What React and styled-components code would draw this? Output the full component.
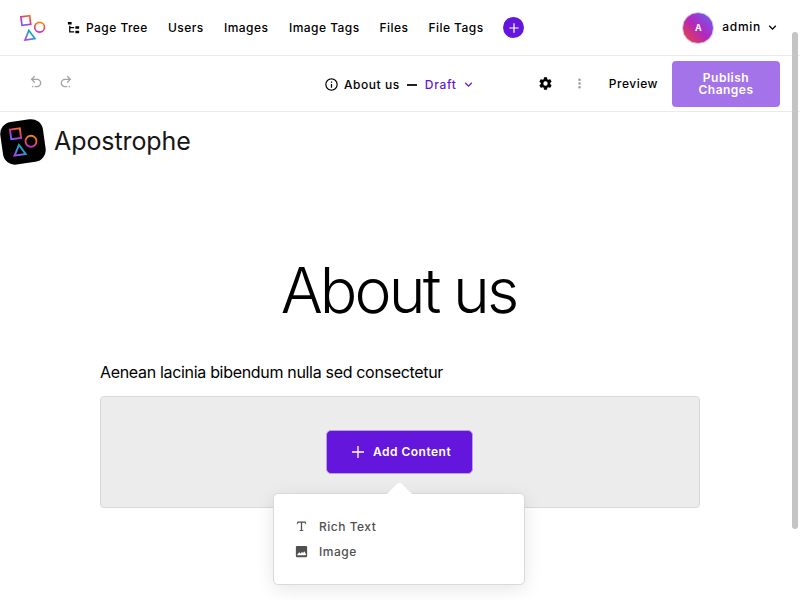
import React from 'react';
import styled, { createGlobalStyle } from 'styled-components';

const Global = createGlobalStyle`
  *, *::before, *::after { box-sizing: border-box; }
  html, body { margin: 0; height: 100%; overflow: hidden; background: #fff; }
  body { font-family: Inter, 'Liberation Sans', sans-serif; color: #000; }
  button { font: inherit; letter-spacing: inherit; color: inherit; border: 0; padding: 0; background: none; }
`;

const Page = styled.div`
  position: relative;
  width: 800px;
  height: 600px;
  overflow: hidden;
`;

const Bar = styled.header`
  display: flex;
  align-items: center;
  height: 56px;
  border-bottom: 1px solid #eaeaea;
  padding: ${p => p.$pad};
  font-size: 12px;
  font-weight: 500;
  line-height: 16px;
  letter-spacing: 0.5px;
`;

const LogoSlot = styled.div`
  display: flex;
  width: 46px;
`;

const Nav = styled.nav`
  display: flex;
  align-items: center;
  gap: 20px;
`;

const NavItem = styled.button`
  display: flex;
  align-items: center;
  gap: 5px;
  white-space: nowrap;
  letter-spacing: 0.45px;
  width: ${p => p.$w}px;
`;

const AddButton = styled.button`
  display: flex;
  align-items: center;
  justify-content: center;
  width: 21px;
  height: 21px;
  border-radius: 50%;
  background: #6516dd;
  color: #fff;
`;

const UserMenu = styled.button`
  display: flex;
  align-items: center;
  margin-left: auto;
`;

const Avatar = styled.span`
  display: flex;
  align-items: center;
  justify-content: center;
  width: 32px;
  height: 32px;
  margin-right: 8px;
  border: 1px solid #d9c9e8;
  border-radius: 50%;
  background: linear-gradient(45deg, #ea433a 5%, #b327bf 50%, #6b62f5 95%);
  background-origin: border-box;
  color: #fff;
  font-size: 9px;
  font-weight: 700;
  letter-spacing: 0;
`;

const UserName = styled.span`
  margin: -1px 4px 0 0;
  letter-spacing: 0.7px;
`;

const Icon = styled.svg`
  display: block;
  flex: none;
  width: ${p => p.$size}px;
  height: ${p => p.$size}px;
  fill: currentColor;
  color: ${p => p.$color || 'inherit'};
`;

const Column = styled.div`
  display: flex;
  align-items: center;
  flex: ${p => p.$flex};
  justify-content: ${p => p.$justify || 'flex-start'};
  gap: ${p => p.$gap || 0}px;
`;

const History = styled(Column)`
  padding: 0 0 4px 8px;
`;

const PageStatus = styled(Column)`
  padding-top: 2px;
`;

const Title = styled.span`
  margin: 0 7px 0 5px;
  letter-spacing: 0.55px;
`;

const Status = styled.button`
  display: flex;
  align-items: center;
  gap: 4px;
  margin-left: 8px;
  color: #6516dd;
  letter-spacing: 0.7px;
`;

const Dash = styled.span`
  width: 10px;
  height: 2px;
  background: #222;
`;

const Preview = styled.button`
  margin: 0 14px 0 22px;
`;

const Publish = styled.button`
  width: 108px;
  height: 46px;
  border-radius: 4px;
  background: #a473ea;
  color: #fff;
  font-weight: 600;
  line-height: 12px;
`;

const PublishLine = styled.span`
  display: block;
  height: 12px;
`;

const Brand = styled.div`
  display: flex;
  align-items: center;
  height: 60px;
  gap: 8px;
  font-size: 25px;
  letter-spacing: -0.08px;
  color: #161616;
`;

const BrandName = styled.span`
  margin-top: -2px;
`;

const Heading = styled.h1`
  margin: 79px 0 0;
  padding-right: 3px;
  text-align: center;
  font-size: 62.5px;
  line-height: 78px;
  font-weight: 275;
  letter-spacing: -2.9px;
`;

const Content = styled.main`
  width: 600px;
  margin: 31px auto 0;
`;

const Paragraph = styled.p`
  margin: 0 0 12px;
  font-size: 16px;
  line-height: 24px;
  letter-spacing: -0.32px;
`;

const DropArea = styled.section`
  display: flex;
  justify-content: center;
  height: 112px;
  padding-top: 33px;
  border: 1px solid #d9d9d9;
  border-radius: 4px;
  background: #ececec;
`;

const AddContent = styled.div`
  position: relative;
  width: 148px;
  height: 44px;
`;

const AddContentButton = styled.button`
  display: flex;
  align-items: center;
  width: 147px;
  height: 44px;
  padding: 0 0 1px 23px;
  gap: 7px;
  border: 1px solid #b9a0dd;
  border-radius: 5px;
  background: #6516dd;
  color: #fff;
  font-size: 12px;
  font-weight: 600;
  letter-spacing: 0.48px;
  white-space: nowrap;
`;

const Menu = styled.div`
  position: absolute;
  top: 63px;
  left: -53px;
  width: 252px;
  height: 92px;
  padding: 20px;
  border: 1px solid #d9d9d9;
  border-radius: 5px;
  background: #fff;
  box-shadow: 0 4px 18px rgba(0, 0, 0, 0.1);
  font-size: 12px;
  font-weight: 500;
  letter-spacing: 0.5px;
`;

const Tip = styled.svg`
  position: absolute;
  top: -12px;
  left: 112px;
  width: 27px;
  height: 13px;
`;

const MenuItem = styled.button`
  display: flex;
  align-items: center;
  height: 25px;
  gap: 10px;
  color: #505050;
`;

const Scrollbar = styled.div`
  position: absolute;
  top: 32px;
  left: 792px;
  width: 6px;
  height: 497px;
  border-radius: 3px;
  background: #c4c4c4;
`;

const paths = {
  tree: 'M3,3H9V7H3V3M15,10H21V14H15V10M15,17H21V21H15V17M13,13H7V18H13V20H7L5,20V9H7V11H13V13Z',
  plus: 'M19,12.9H12.9V19H11.1V12.9H5V11.1H11.1V5H12.9V11.1H19V12.9Z',
  plusWide: 'M21,13H13V21H11V13H3V11H11V3H13V11H21Z',
  chevron: 'M7.41,8.58L12,13.17L16.59,8.58L18,10L12,16L6,10L7.41,8.58Z',
  info: 'M11,9H13V7H11M12,20C7.59,20 4,16.41 4,12C4,7.59 7.59,4 12,4C16.41,4 20,7.59 20,12C20,16.41 16.41,20 12,20M12,2A10,10 0 0,0 2,12A10,10 0 0,0 12,22A10,10 0 0,0 22,12A10,10 0 0,0 12,2M11,17H13V11H11V17Z',
  cog: 'M12,15.5A3.5,3.5 0 0,1 8.5,12A3.5,3.5 0 0,1 12,8.5A3.5,3.5 0 0,1 15.5,12A3.5,3.5 0 0,1 12,15.5M19.43,12.97C19.47,12.65 19.5,12.33 19.5,12C19.5,11.67 19.47,11.34 19.43,11L21.54,9.37C21.73,9.22 21.78,8.95 21.66,8.73L19.66,5.27C19.54,5.05 19.27,4.96 19.05,5.05L16.56,6.05C16.04,5.66 15.5,5.32 14.87,5.07L14.5,2.42C14.46,2.18 14.25,2 14,2H10C9.75,2 9.54,2.18 9.5,2.42L9.13,5.07C8.5,5.32 7.96,5.66 7.44,6.05L4.95,5.05C4.73,4.96 4.46,5.05 4.34,5.27L2.34,8.73C2.21,8.95 2.27,9.22 2.46,9.37L4.57,11C4.53,11.34 4.5,11.67 4.5,12C4.5,12.33 4.53,12.65 4.57,12.97L2.46,14.63C2.27,14.78 2.21,15.05 2.34,15.27L4.34,18.73C4.46,18.95 4.73,19.03 4.95,18.95L7.44,17.94C7.96,18.34 8.5,18.68 9.13,18.93L9.5,21.58C9.54,21.82 9.75,22 10,22H14C14.25,22 14.46,21.82 14.5,21.58L14.87,18.93C15.5,18.67 16.04,18.34 16.56,17.94L19.05,18.95C19.27,19.03 19.54,18.95 19.66,18.73L21.66,15.27C21.78,15.05 21.73,14.78 21.54,14.63L19.43,12.97Z',
  dots: 'M12,16A2,2 0 0,1 14,18A2,2 0 0,1 12,20A2,2 0 0,1 10,18A2,2 0 0,1 12,16M12,10A2,2 0 0,1 14,12A2,2 0 0,1 12,14A2,2 0 0,1 10,12A2,2 0 0,1 12,10M12,4A2,2 0 0,1 14,6A2,2 0 0,1 12,8A2,2 0 0,1 10,6A2,2 0 0,1 12,4Z',
  undo: 'M13.5,7A6.5,6.5 0 0,1 20,13.5A6.5,6.5 0 0,1 13.5,20H10V18H13.5C16,18 18,16 18,13.5C18,11 16,9 13.5,9H7.83L10.91,12.09L9.5,13.5L4,8L9.5,2.5L10.92,3.91L7.83,7H13.5M6,18H8V20H6V18Z',
  redo: 'M10.5,7A6.5,6.5 0 0,0 4,13.5A6.5,6.5 0 0,0 10.5,20H14V18H10.5C8,18 6,16 6,13.5C6,11 8,9 10.5,9H16.17L13.09,12.09L14.5,13.5L20,8L14.5,2.5L13.08,3.91L16.17,7H10.5M18,18H16V20H18V18Z',
  text: 'M18.5,4L19.66,8.35L18.7,8.61C18.25,7.74 17.79,6.87 17.26,6.43C16.73,6 16.11,6 15.5,6H13V16.5C13,17 13,17.5 13.33,17.75C13.67,18 14.33,18 15,18V19H9V18C9.67,18 10.33,18 10.67,17.75C11,17.5 11,17 11,16.5V6H8.5C7.89,6 7.27,6 6.74,6.43C6.21,6.87 5.75,7.74 5.3,8.61L4.34,8.35L5.5,4H18.5Z',
  image: 'M5,18H19V16L16.5,11.5L14.5,14.5L12.5,12.5L11,15.5L8.5,13L5,17V18M21,19V5C21,3.89 20.1,3 19,3H5A2,2 0 0,0 3,5V19A2,2 0 0,0 5,21H19A2,2 0 0,0 21,19Z',
};

const Glyph = ({ name, size, color }) => (
  <Icon viewBox="0 0 24 24" $size={size} $color={color} aria-hidden="true">
    <path d={paths[name]} fillRule="evenodd" />
  </Icon>
);

const Shapes = ({ id }) => (
  <>
    <defs>
      <linearGradient id={`${id}-square`} x1="0.8" y1="0" x2="0.2" y2="1">
        <stop offset="0" stopColor="#f0701a" />
        <stop offset="0.5" stopColor="#d62fb0" />
        <stop offset="1" stopColor="#6d63ff" />
      </linearGradient>
      <linearGradient id={`${id}-circle`} x1="0.6" y1="0" x2="0.4" y2="1">
        <stop offset="0" stopColor="#f08a00" />
        <stop offset="0.5" stopColor="#ee4f45" />
        <stop offset="1" stopColor="#c52bd0" />
      </linearGradient>
      <linearGradient id={`${id}-triangle`} x1="0.7" y1="0.2" x2="0.1" y2="1">
        <stop offset="0" stopColor="#12a8b4" />
        <stop offset="0.5" stopColor="#3d8fdc" />
        <stop offset="1" stopColor="#b63cf5" />
      </linearGradient>
    </defs>
    <g fill="none" strokeWidth="1.7">
      <path d="M0.9 2.8L9.7 1.7L10.7 10.3L2 11.3Z" stroke={`url(#${id}-square)`} />
      <circle cx="19.6" cy="13.2" r="4.9" stroke={`url(#${id}-circle)`} />
      <path d="M8.9 16.4L5 26L14.9 24.6Z" stroke={`url(#${id}-triangle)`} />
    </g>
  </>
);

const Logo = styled.svg`
  display: block;
  flex: none;
  width: ${p => p.$w}px;
  height: ${p => p.$h}px;
`;

const navItems = [
  ['Users', 36],
  ['Images', 45],
  ['Image Tags', 70.5],
  ['Files', 29],
  ['File Tags', 54.5],
];

export default function App() {
  return (
    <Page>
      <Global />
      <Bar $pad="0 20px">
        <LogoSlot>
          <Logo $w={27} $h={27} viewBox="0 0 27 27"><Shapes id="nav" /></Logo>
        </LogoSlot>
        <Nav>
          <NavItem $w={82}><Glyph name="tree" size={15} />Page Tree</NavItem>
          {navItems.map(([label, w]) => <NavItem key={label} $w={w}>{label}</NavItem>)}
          <AddButton aria-label="Add"><Glyph name="plus" size={16} /></AddButton>
        </Nav>
        <UserMenu>
          <Avatar>A</Avatar>
          <UserName>admin</UserName>
          <Glyph name="chevron" size={15} />
        </UserMenu>
      </Bar>
      <Bar $pad="0 20px">
        <History $flex="0 0 304px" $gap={14}>
          <Glyph name="undo" size={16} color="#a3a3a3" />
          <Glyph name="redo" size={16} color="#a3a3a3" />
        </History>
        <PageStatus $flex="1 1 auto">
          <Glyph name="info" size={15} />
          <Title>About us</Title>
          <Dash />
          <Status>Draft<Glyph name="chevron" size={15} /></Status>
        </PageStatus>
        <Column $flex="none">
          <Glyph name="cog" size={15} />
          <Column $flex="0 0 34px" $justify="flex-end"><Glyph name="dots" size={15} color="#999" /></Column>
          <Preview>Preview</Preview>
          <Publish>
            <PublishLine>Publish</PublishLine>
            <PublishLine>Changes</PublishLine>
          </Publish>
        </Column>
      </Bar>
      <Brand>
        <Logo $w={46} $h={48} viewBox="0 0 46 48">
          <rect x="1.5" y="2.4" width="43" height="43" rx="12" transform="rotate(-8 23 24)" />
          <g transform="translate(9 8.5) scale(1.12)"><Shapes id="brand" /></g>
        </Logo>
        <BrandName>Apostrophe</BrandName>
      </Brand>
      <Heading>About us</Heading>
      <Content>
        <Paragraph>Aenean lacinia bibendum nulla sed consectetur</Paragraph>
        <DropArea>
          <AddContent>
            <AddContentButton><Glyph name="plusWide" size={16} />Add Content</AddContentButton>
            <Menu>
              <Tip viewBox="0 0 27 13">
                <path d="M0 13L11 2Q13.5 0 16 2L27 13Z" fill="#fff" />
              </Tip>
              <MenuItem><Glyph name="text" size={15} />Rich Text</MenuItem>
              <MenuItem><Glyph name="image" size={15} />Image</MenuItem>
            </Menu>
          </AddContent>
        </DropArea>
      </Content>
      <Scrollbar />
    </Page>
  );
}
